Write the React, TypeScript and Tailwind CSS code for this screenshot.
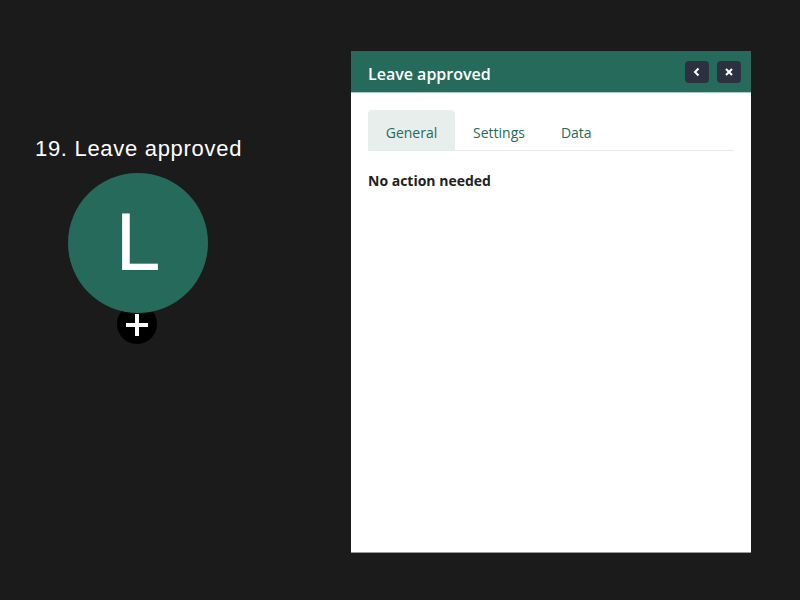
import React from "react";

export default function App() {
  return (
    <div className="relative w-[800px] h-[600px] bg-[#1b1b1b] overflow-hidden">
      {/* canvas node */}
      <div className="absolute left-[35px] top-[135px] text-[22px] leading-[28px] tracking-[0.7px] text-white font-['Liberation_Sans',Arial,sans-serif]">
        19. Leave approved
      </div>
      <div className="absolute left-[117px] top-[304px] w-[40px] h-[40px] rounded-full bg-black flex items-center justify-center">
        <svg width="24" height="24" viewBox="0 0 24 24" className="mt-[2px]">
          <path d="M12 1v22M1 12h22" stroke="white" strokeWidth="4" />
        </svg>
      </div>
      <div className="absolute left-[68px] top-[173px] w-[140px] h-[140px] rounded-full bg-[#266a5c] flex items-center justify-center">
        <span className="text-white text-[81px] leading-none font-['Liberation_Sans',Arial,sans-serif] mt-[-2px]">L</span>
      </div>

      {/* panel */}
      <div className="absolute left-[351px] top-[51px] w-[400px] h-[501px] bg-white flex flex-col shadow-[0_1px_0_#9a9a9a] font-['Open_Sans','Noto_Sans',sans-serif]">
        <div className="h-[42px] bg-[#266a5c] border-b border-[#a8c9c0] flex items-center justify-between pl-[17px] pr-[10px]">
          <span className="text-white text-[16px] font-semibold mt-[5px]">Leave approved</span>
          <div className="flex gap-[8px]">
            <button className="w-[24px] h-[22px] rounded-[4px] bg-[#2b3140] flex items-center justify-center">
              <svg width="10" height="10" viewBox="0 0 10 10">
                <path d="M6.5 1.5 3 5l3.5 3.5" stroke="white" strokeWidth="2" fill="none" />
              </svg>
            </button>
            <button className="w-[24px] h-[22px] rounded-[4px] bg-[#2b3140] flex items-center justify-center">
              <svg width="10" height="10" viewBox="0 0 10 10">
                <path d="M2 2l6 6M8 2 2 8" stroke="white" strokeWidth="2" fill="none" />
              </svg>
            </button>
          </div>
        </div>
        <div className="px-[17px] pt-[17px]">
          <div className="flex border-b border-[#e6ecea] h-[41px]">
            <div className="w-[87px] h-[40px] rounded-t-[4px] bg-[#e7eeec] flex items-center justify-center pt-[4px] text-[14px] text-[#266a5c]">General</div>
            <div className="px-[18px] h-[40px] flex items-center pt-[4px] text-[14px] text-[#266a5c]">Settings</div>
            <div className="px-[18px] h-[40px] flex items-center pt-[4px] text-[14px] text-[#266a5c]">Data</div>
          </div>
          <div className="mt-[19px] text-[14px] font-bold text-[#222]">No action needed</div>
        </div>
      </div>
    </div>
  );
}
